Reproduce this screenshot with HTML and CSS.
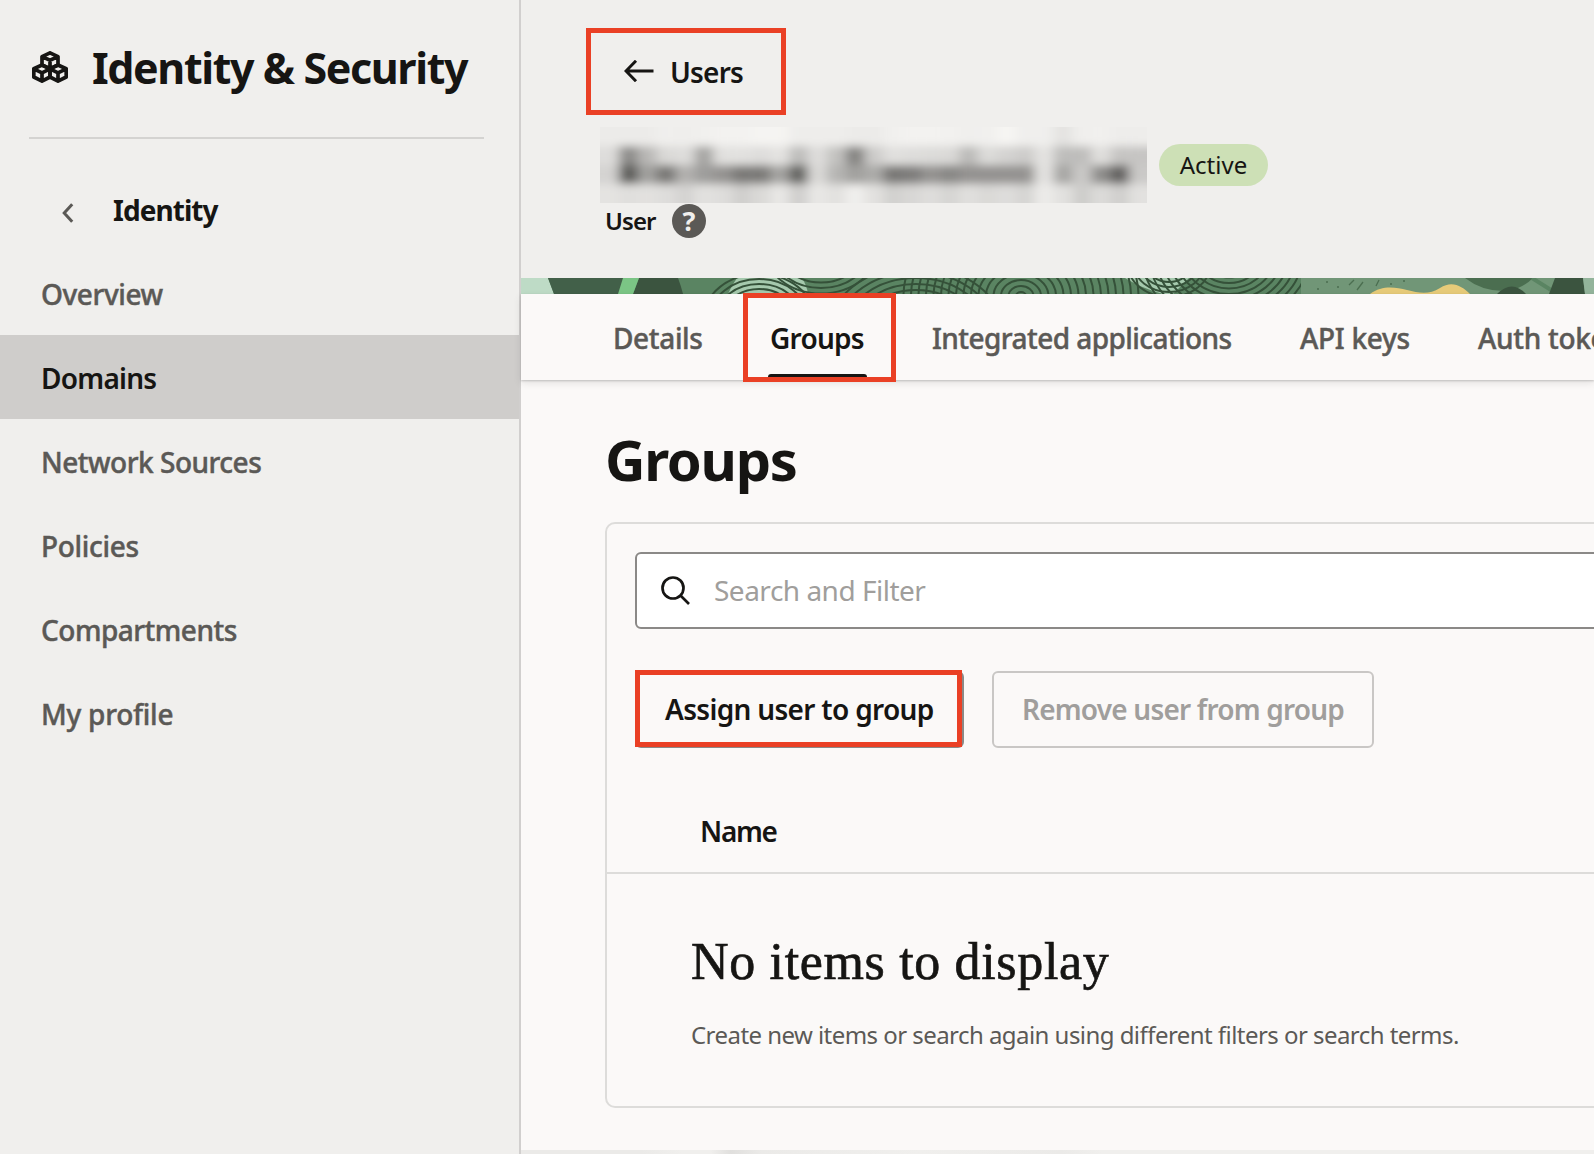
FILE: index.html
```html
<!DOCTYPE html>
<html lang="en">
<head>
<meta charset="utf-8">
<title>Groups - Identity &amp; Security</title>
<link rel="stylesheet" href="styles.css">
</head>
<body>
<div class="app">
  <aside class="sidebar">
    <header class="sidebar-header">
      <svg class="cubes" viewBox="0 0 36 32" fill="none" stroke="#161513" stroke-width="3.700" stroke-linejoin="round">
        <path d="M18 1.800 26 5.600V14L18 17.600 10 14V5.600ZM10 5.600 18 9.200 26 5.600M18 9.200V17.600"/>
        <path d="M10 14 18 17.800V26L10 30.200 1.800 26V17.800ZM1.800 17.800 10 21.800 18 17.800M10 21.800V30.200"/>
        <path d="M26 14 34.200 17.800V26L26 30.200 18 26V17.800ZM18 17.800 26 21.800 34.200 17.800M26 21.800V30.200"/>
      </svg>
      <h1 class="sidebar-title">Identity &amp; Security</h1>
    </header>
    <div class="section">
      <svg class="chevron" viewBox="0 0 12 20" fill="none" stroke="#5b5956" stroke-width="3"><path d="M10.200 1.200 2.200 10 10.200 18.800"/></svg>
      <span class="section-title">Identity</span>
    </div>
    <nav class="nav">
      <a class="nav-item n-overview">Overview</a>
      <a class="nav-item n-domains selected">Domains</a>
      <a class="nav-item n-network">Network Sources</a>
      <a class="nav-item n-policies">Policies</a>
      <a class="nav-item n-compartments">Compartments</a>
      <a class="nav-item n-profile">My profile</a>
    </nav>
  </aside>

  <main class="main">
    <header class="page-header">
      <a class="back">
        <svg class="arrow" viewBox="0 0 30 22" fill="none" stroke="#161513" stroke-width="3"><path d="M29.500 11H2M12 .8 2 11 12 21.200"/></svg>
        <span class="back-label">Users</span>
      </a>
      <div class="name-row">
        <svg class="redacted" viewBox="0 0 547 76" preserveAspectRatio="none">
          <defs><filter id="soft" x="-5%" y="-20%" width="110%" height="140%"><feGaussianBlur stdDeviation="6 4.500"/></filter></defs>
          <rect width="547" height="76" fill="#e6e5e3"/>
          <g id="mosaic" filter="url(#soft)"></g>
        </svg>
        <span class="badge">Active</span>
      </div>
      <div class="kind-row">
        <span class="kind">User</span>
        <span class="help">?</span>
      </div>
    </header>

    <svg class="banner" viewBox="0 0 1073 16" preserveAspectRatio="none">
      <rect width="1073" height="16" fill="#5a8462"/>
      <path d="M0 0H27L33 16H0Z" fill="#bedbc6"/>
      <path d="M27 0H103L98 16H33Z" fill="#426049"/>
      <path d="M118 0H157Q160 8 162 16H112Z" fill="#3b543f"/>
      <path d="M102 0H118L112 16H97Z" fill="#7bc585"/>
      <path d="M216 0H281Q286 8 287 16H207Q211 7 216 0Z" fill="#a5c9ad"/>
      <path d="M604 0H668L652 16H642Q620 10 604 0Z" fill="#a5c9ad"/>
      <g id="rings" fill="none" stroke="#355139" stroke-width="2"></g>
      <path d="M780 0H1073V16H780Z" fill="#719677"/>
      <path d="M849 16C861 7 874 9 886 12S908 17 919 10C931 2 941 8 949 16Z" fill="#e7cb79"/>
      <path d="M944 0H1012Q1001 11 986 13Q962 14 944 0Z" fill="#4b6e50"/>
      <path d="M976 16Q991 1 1005 16Z" fill="#3b543f"/>
      <path d="M1011 0 1030 12" stroke="#5a8462" stroke-width="4"/>
      <path d="M1034 0H1062L1064 16H1028Z" fill="#3b543f"/>
      <path d="M1062 0H1073V16H1064Z" fill="#93b49b"/>
      <path d="M833 2 828 7M842 4 836 12M858 2l-3 6M869 6h2M882 3h2M816 9h2M805 4h2M796 11h2" stroke="#4b6e50" stroke-width="1.300"/>
    </svg>

    <nav class="tabs">
      <a class="tab t-details">Details</a>
      <a class="tab t-groups current">Groups</a>
      <a class="tab t-apps">Integrated applications</a>
      <a class="tab t-keys">API keys</a>
      <a class="tab t-tokens">Auth tokens</a>
    </nav>

    <section class="content">
      <h2 class="heading">Groups</h2>
      <div class="card">
        <div class="search">
          <svg class="lens" viewBox="0 0 29 29" fill="none" stroke="#161513" stroke-width="2.700"><circle cx="12" cy="12" r="10.500"/><path d="M19.500 19.500 28 28"/></svg>
          <span class="placeholder">Search and Filter</span>
        </div>
        <div class="actions">
          <button class="button assign"><span class="assign-label">Assign user to group</span></button>
          <button class="button remove"><span class="remove-label">Remove user from group</span></button>
        </div>
        <div class="table-head"><span class="column">Name</span></div>
        <div class="empty">
          <h3 class="empty-title">No items to display</h3>
          <p class="empty-text">Create new items or search again using different filters or search terms.</p>
        </div>
      </div>
    </section>
    <div class="page-foot"></div>
  </main>
</div>
<script src="script.js"></script>
</body>
</html>
```

FILE: styles.css
```css
*, *::before, *::after { box-sizing: border-box; }
body {
  margin: 0;
  overflow: hidden;
  background: #f0efed;
  color: #161513;
  font-family: "Noto Sans", "Open Sans", sans-serif;
  font-size: 28px;
}
h1, h2, h3, p { margin: 0; }
.app { display: flex; width: 1594px; height: 1154px; overflow: hidden; white-space: nowrap; }

.sidebar { width: 521px; flex: none; border-right: 2px solid #d1cfce; }
.sidebar-header {
  display: flex;
  align-items: center;
  height: 139px;
  margin: 0 35px 0 29px;
  padding: 0 0 2px 3px;
  border-bottom: 2px solid #d4d3d1;
}
.cubes { width: 36px; height: 32px; margin-right: 24px; margin-top: -1px; }
.sidebar-title { font-size: 43px; line-height: 60px; font-weight: 700; letter-spacing: -1.4px; }
.section { display: flex; align-items: center; height: 112px; padding: 30px 0 0 62px; }
.chevron { width: 12px; height: 20px; margin-right: 39px; margin-top: 5px; }
.section-title { font-weight: 700; line-height: 40px; letter-spacing: -.95px; }
.nav { display: flex; flex-direction: column; }
.nav-item { height: 84px; padding-left: 41px; line-height: 86px; font-weight: 500; color: #5b5956; -webkit-text-stroke: .45px currentColor; }
.nav-item.selected { background: #cfcdcb; color: #161513; font-weight: 600; -webkit-text-stroke: 0; }
.n-overview { letter-spacing: -.42px; }
.n-domains { letter-spacing: -.75px; }
.n-network { letter-spacing: -.5px; }
.n-policies { letter-spacing: -.3px; }
.n-compartments { letter-spacing: -.5px; }
.n-profile { letter-spacing: -.25px; }

.main { flex: 1; min-width: 0; display: flex; flex-direction: column; background: #fbf9f8; }
.page-header { height: 278px; flex: none; padding: 28px 0 0 65px; background: #f0efed; }
.back {
  display: flex;
  align-items: center;
  width: 200px;
  height: 87px;
  padding-left: 33px;
  border: 5px solid #ea4025;
}
.arrow { width: 30px; height: 22px; margin-top: -2px; }
.back-label { margin-left: 16px; font-weight: 600; line-height: 40px; letter-spacing: -.8px; }
.name-row { display: flex; align-items: center; height: 76px; margin: 12px 0 0 14px; }
.redacted { width: 547px; height: 76px; flex: none; }
.badge {
  width: 109px;
  height: 42px;
  margin-left: 12px;
  border-radius: 21px;
  background: #cde0b6;
  font-size: 24px;
  line-height: 42px;
  text-align: center;
}
.kind-row { display: flex; align-items: center; height: 36px; margin-left: 19px; }
.kind { width: 51px; font-size: 24px; line-height: 36px; font-weight: 600; letter-spacing: -.9px; }
.help {
  width: 34px;
  height: 34px;
  margin-left: 16px;
  border-radius: 50%;
  background: #5b5956;
  color: #f0efed;
  font-size: 27px;
  line-height: 34px;
  font-weight: 700;
  text-align: center;
}

.banner { display: block; width: 1073px; height: 16px; flex: none; }
.tabs {
  display: flex;
  align-items: center;
  height: 86px;
  flex: none;
  padding-left: 90px;
  background: #fbf9f8;
  box-shadow: 0 1px 2px rgba(22, 21, 19, .2), 0 3px 8px rgba(22, 21, 19, .1);
}
.tab { flex: none; padding-top: 2px; line-height: 86px; font-weight: 500; color: #5b5956; -webkit-text-stroke: .45px currentColor; }
.t-details { width: 132px; padding-left: 2px; letter-spacing: -.35px; }
.tab.current {
  position: relative;
  width: 153px;
  height: 89px;
  margin-bottom: -1px;
  padding: 0 0 0 22px;
  border: 5px solid #ea4025;
  line-height: 81px;
  font-weight: 600;
  letter-spacing: -.75px;
  color: #161513;
  -webkit-text-stroke: 0;
}
.tab.current::after {
  content: "";
  position: absolute;
  left: 20px;
  bottom: 0;
  width: 99px;
  height: 3px;
  border-radius: 4px 4px 0 0;
  background: #161513;
}
.t-apps { width: 368px; padding-left: 36px; letter-spacing: -.56px; }
.t-keys { width: 178px; padding-left: 36px; letter-spacing: -.28px; }
.t-tokens { padding-left: 36px; letter-spacing: -.3px; }

.content { flex: none; height: 770px; padding: 41px 0 0 84px; }
.heading { height: 101px; font-size: 56px; line-height: 76px; font-weight: 700; letter-spacing: -1.3px; }
.card {
  width: 1010px;
  height: 586px;
  border: 2px solid #dddcda;
  border-radius: 10px;
}
.search {
  display: flex;
  align-items: center;
  width: 980px;
  height: 77px;
  margin: 28px 0 0 28px;
  padding-left: 24px;
  border: 2px solid #8b8987;
  border-radius: 6px;
  background: #fff;
}
.lens { width: 29px; height: 29px; margin-top: -1px; }
.placeholder { margin: -2px 0 0 24px; line-height: 40px; letter-spacing: -.5px; color: #a09e9c; }
.actions { display: flex; gap: 28px; height: 77px; margin: 42px 0 0 28px; }
.button {
  display: flex;
  align-items: center;
  height: 77px;
  padding: 0 0 1px 28px;
  border: 2px solid #8b8987;
  border-radius: 6px;
  background: transparent;
  font: 600 28px "Noto Sans", "Open Sans", sans-serif;
  color: #161513;
}
.assign { position: relative; width: 329px; letter-spacing: -.68px; }
.assign::before {
  content: "";
  position: absolute;
  left: -2px;
  top: -3px;
  width: 327px;
  height: 77px;
  border: 5px solid #ea4025;
}
.remove { width: 382px; border-color: #c9c7c5; letter-spacing: -.8px; color: #a09e9c; }
.table-head { display: flex; height: 126px; padding: 63px 0 0 93px; border-bottom: 2px solid #dddcda; }
.column { font-weight: 600; line-height: 40px; letter-spacing: -1.3px; }
.empty { padding: 56px 0 0 84px; }
.empty-title { font: 400 52px/64px "Liberation Serif", serif; letter-spacing: .66px; -webkit-text-stroke: .7px #161513; }
.empty-text { margin-top: 21px; font-size: 24px; line-height: 40px; letter-spacing: -.55px; color: #5b5956; }
.page-foot { height: 4px; background: linear-gradient(90deg, #ebeae8 0 120px, #f0efed 160px 190px, #e0dfdd 210px, #ebeae8 240px, #f0efed 400px, #ebeae8 540px, #f0efed 580px); }
```

FILE: script.js
```js
const NS = "http://www.w3.org/2000/svg";
function add(parent, tag, attrs) {
  const el = document.createElementNS(NS, tag);
  for (const key in attrs) el.setAttribute(key, attrs[key]);
  parent.appendChild(el);
}

// Brightness of the obscured name, one row per mosaic line
const rows = [
  [236, 236, 236, 240, 239, 241, 243, 243, 245, 245, 238, 238, 238, 236, 236, 241, 243, 243, 242, 240, 241, 246, 240, 240, 228, 240, 241, 238, 238],
  [222, 140, 185, 218, 222, 165, 226, 226, 222, 228, 190, 222, 195, 132, 205, 225, 222, 220, 218, 188, 220, 212, 205, 228, 190, 190, 224, 198, 198],
  [212, 92, 162, 120, 178, 158, 148, 122, 122, 165, 100, 218, 182, 162, 172, 120, 126, 148, 136, 148, 148, 148, 148, 228, 166, 202, 142, 98, 202],
  [228, 224, 226, 222, 212, 226, 222, 208, 218, 232, 208, 232, 226, 240, 226, 210, 216, 222, 214, 224, 218, 222, 214, 236, 226, 206, 220, 208, 226]
];
const mosaic = document.getElementById("mosaic");
rows.forEach((row, y) => row.forEach((v, x) => {
  const first = y === 0, last = y === 3;
  add(mosaic, "rect", {
    x: x === 0 ? -20 : x * 18.9, y: first ? -20 : y * 19,
    width: x === 0 || x === 28 ? 39 : 19.2, height: first || last ? 39 : 19.2,
    fill: `rgb(${v},${v - 1},${v - 3})`
  });
}));

// Tree-ring line work on the banner
const rings = document.getElementById("rings");
[[238, 40, 24, 46, 5], [300, -30, 18, 50, 5.5], [500, 18, 4, 95, 6], [648, -14, 8, 34, 5], [708, -20, 14, 70, 5.5], [395, 60, 30, 75, 6]].forEach(([cx, cy, from, to, step]) => {
  for (let r = from; r < to; r += step) add(rings, "ellipse", { cx, cy, rx: r * 1.25, ry: r });
});
```
